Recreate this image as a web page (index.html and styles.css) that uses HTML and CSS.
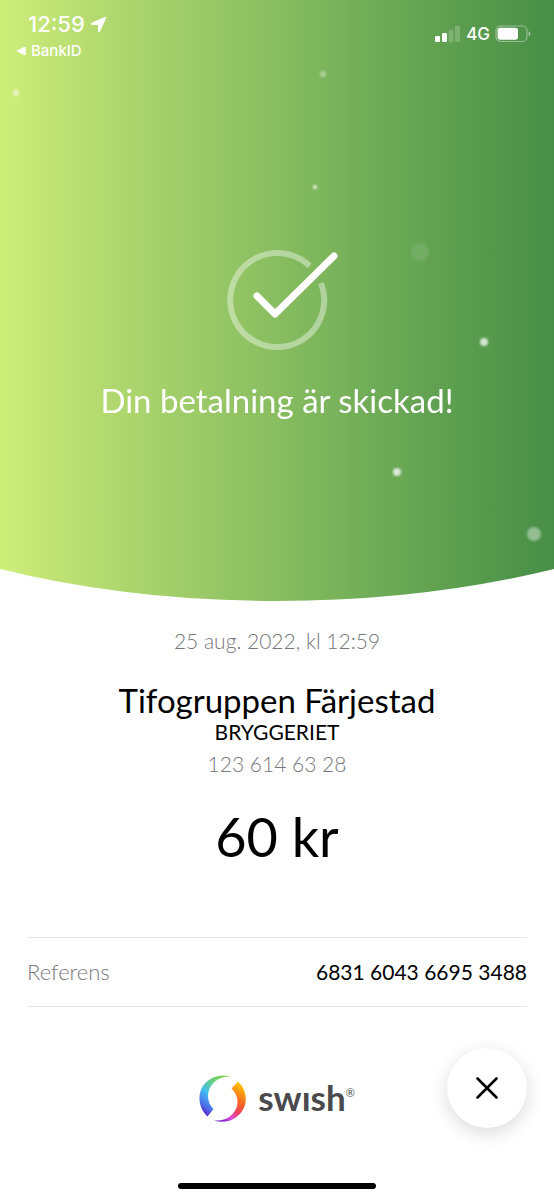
FILE: index.html
```html
<!DOCTYPE html>
<html lang="sv">
<head>
<meta charset="utf-8">
<meta name="viewport" content="width=device-width, initial-scale=1">
<title>Swish</title>
<link rel="stylesheet" href="styles.css">
</head>
<body>
<div class="screen">
  <section class="hero">
    <svg class="hero-bg" viewBox="0 0 554 602" preserveAspectRatio="none" aria-hidden="true">
      <defs>
        <linearGradient id="green">
          <stop offset="0" stop-color="#cfef7a"/>
          <stop offset=".1" stop-color="#bfe274"/>
          <stop offset=".3" stop-color="#a3cf6a"/>
          <stop offset=".5" stop-color="#88bd60"/>
          <stop offset=".75" stop-color="#65a553"/>
          <stop offset="1" stop-color="#488e47"/>
        </linearGradient>
        <filter id="soft" x="-1" y="-1" width="3" height="3"><feGaussianBlur stdDeviation="1"/></filter>
      </defs>
      <path d="M0 0H554V569Q424 601 277 601Q130 601 0 569Z" fill="url(#green)"/>
      <g fill="#fff" filter="url(#soft)">
        <circle cx="16" cy="93" r="3" opacity=".6"/>
        <circle cx="323" cy="74" r="3" opacity=".4"/>
        <circle cx="315" cy="187" r="2" opacity=".85"/>
        <circle cx="420" cy="252" r="9" opacity=".1"/>
        <circle cx="484" cy="342" r="4" opacity=".75"/>
        <circle cx="397" cy="472" r="4" opacity=".75"/>
        <circle cx="534" cy="534" r="7" opacity=".4"/>
      </g>
    </svg>
    <header class="status">
      <div class="status-left">
        <div class="clock"><span>12:59</span>
          <svg width="17" height="17" viewBox="0 0 17 17" aria-hidden="true"><path d="M1.200 7.500L15.300 1.200Q16 1 15.800 1.700L9.500 15.600Q8.700 16.200 8.500 15.300V9.200Q8.300 8.600 7.700 8.500L1.500 8.400Q.6 8 1.200 7.500Z" fill="#fff" stroke="#fff" stroke-linejoin="round"/></svg>
        </div>
        <a class="back" href="#">
          <svg width="10" height="10" viewBox="0 0 10 10" aria-hidden="true"><path d="M1 4.400L8.600 .8Q9.800 .5 9.800 1.500V8.600Q9.700 9.600 8.600 9.200L1 5.600Q0 5 1 4.400Z" fill="#fff"/></svg>
          BankID</a>
      </div>
      <div class="status-right">
        <svg width="26" height="16" viewBox="0 0 26 16" fill="#fff" aria-hidden="true">
          <rect x="0" y="10" width="5" height="6" rx="1"/><rect x="7" y="7" width="5" height="9" rx="1"/>
          <g opacity=".2"><rect x="13.500" y="4" width="5" height="12" rx="1"/><rect x="20" y="0" width="5" height="16" rx="1"/></g>
        </svg>
        <span class="network">4G</span>
        <svg width="36" height="18" viewBox="0 0 36 18" aria-hidden="true">
          <rect x="1" y="1" width="31" height="15.500" rx="4.500" fill="none" stroke="#fff" stroke-opacity=".4" stroke-width="1.200"/>
          <rect x="2.600" y="2.700" width="20.400" height="12" rx="2.600" fill="#fff"/>
          <path d="M33.700 6.300Q35.500 7 35.500 8.700T33.700 11.300Z" fill="#fff" opacity=".5"/>
        </svg>
      </div>
    </header>
    <div class="confirmation">
      <svg width="112" height="102" viewBox="0 0 112 102" fill="none" aria-hidden="true">
        <path d="M82.600 16A47 47 0 1 0 94 33" stroke="#fff" stroke-opacity=".4" stroke-width="6"/>
        <path d="M30 46L48 64L107 6" stroke="#fff" stroke-width="7" stroke-linecap="round" stroke-linejoin="round"/>
      </svg>
      <h1 class="title">Din betalning är skickad!</h1>
    </div>
  </section>
  <main class="receipt">
    <time class="muted" datetime="2022-08-25T12:59">25 aug. 2022, kl 12:59</time>
    <h2 class="payee">Tifogruppen Färjestad</h2>
    <p class="place">BRYGGERIET</p>
    <p class="muted">123 614 63 28</p>
    <p class="amount">60 kr</p>
    <dl class="reference">
      <dt>Referens</dt><dd>6831 6043 6695 3488</dd>
    </dl>
  </main>
  <footer class="footer">
    <div class="brand">
      <svg width="48" height="48" viewBox="0 0 48 48" aria-hidden="true">
        <defs>
          <linearGradient id="left" x1=".8" y1="0" x2=".2" y2="1"><stop offset="0" stop-color="#8bd14a"/><stop offset=".3" stop-color="#62cf8b"/><stop offset=".55" stop-color="#43bff0"/><stop offset=".8" stop-color="#4d73e8"/><stop offset="1" stop-color="#5b22c7"/></linearGradient>
          <linearGradient id="right" x1=".7" y1="0" x2=".2" y2="1"><stop offset="0" stop-color="#ffc400"/><stop offset=".35" stop-color="#f66b21"/><stop offset=".6" stop-color="#ed3d5c"/><stop offset=".8" stop-color="#d94fe0"/><stop offset="1" stop-color="#6a1fc4"/></linearGradient>
        </defs>
        <path d="M32 1.500C18-2.500 4 5 1 18C-1 27 2.500 36 8.500 41.500L14.500 34C7.500 27 7 16 14 8.500C19 3 25 1.500 32 1.500Z" fill="url(#left)"/>
        <path d="M15 45.500C28 50 42 43 46 30C48.500 21 45 12 39 6.500L32.500 13.500C39.500 20 41 31 34 38.500C29 44 22 46 15 45.500Z" fill="url(#right)"/>
      </svg>
      <span class="wordmark">swısh<sup>®</sup></span>
    </div>
    <button class="close" type="button" aria-label="Stäng">
      <svg width="24" height="24" viewBox="0 0 24 24" aria-hidden="true"><path d="M2.500 2.500L21.500 21.500M21.500 2.500L2.500 21.500" stroke="#000" stroke-width="2.600" stroke-linecap="round"/></svg>
    </button>
    <div class="home-bar"></div>
  </footer>
</div>
</body>
</html>
```
FILE: styles.css
```css
* { box-sizing: border-box; }
body { margin: 0; background: #fff; color: #000; font-family: Lato, "Open Sans", sans-serif; }
h1, h2, p, dl, dd { margin: 0; font-weight: 400; }
svg { display: block; flex: none; }
.screen { min-height: 100vh; display: flex; flex-direction: column; }
.hero { position: relative; color: #fff; padding-bottom: 182px; }
.hero-bg { position: absolute; inset: 0; width: 100%; height: 100%; }
.status { position: relative; display: flex; justify-content: space-between; padding: 12px 23px 0 16px; font-family: Inter, sans-serif; }
.clock { display: flex; align-items: center; gap: 5px; padding-left: 12px; font-size: 22px; line-height: 24px; font-weight: 500; }
.back { display: flex; align-items: center; gap: 5px; margin-top: 6px; font-size: 15px; line-height: 18px; font-weight: 500; color: #fff; text-decoration: none; }
.status-right { display: flex; align-items: center; gap: 5px; height: 44px; }
.network { font-size: 17px; font-weight: 500; }
.confirmation { position: relative; display: flex; flex-direction: column; align-items: center; padding-top: 190px; text-align: center; }
.confirmation svg { margin-left: 12px; }
.title { margin-top: 28px; font-size: 33px; line-height: 40px; }
.receipt { padding: 25px 27px 0; text-align: center; }
.muted { display: block; color: #77777c; font-size: 21px; line-height: 28px; font-weight: 300; }
.payee { margin-top: 25px; font-size: 33px; line-height: 40px; }
.place { font-size: 21px; line-height: 24px; margin-bottom: 6px; }
.amount { margin: 24px 0 65px; font-size: 54px; line-height: 70px; }
.reference { display: flex; justify-content: space-between; padding: 20px 0; border: solid #e4e4e4; border-width: 1px 0; font-size: 21px; line-height: 28px; }
.reference dt { color: #77777c; font-size: 22px; font-weight: 300; }
.footer { display: grid; grid-template-columns: 1fr auto 1fr; align-items: center; margin-top: auto; padding: 0 27px 11px; }
.brand { grid-column: 2; display: flex; align-items: center; gap: 11px; padding-top: 22px; }
.wordmark { color: #4a4a4d; font-size: 35px; line-height: 44px; font-weight: 700; white-space: nowrap; padding-bottom: 4px; }
.wordmark sup { font-size: 11px; line-height: 0; vertical-align: 14px; font-weight: 400; }
.close { justify-self: end; display: grid; place-items: center; width: 80px; height: 80px; padding: 0; border: 0; border-radius: 50%; background: #fff; box-shadow: 0 5px 18px rgba(0,0,0,.15); }
.home-bar { grid-column: 1 / -1; justify-self: center; width: 198px; height: 6px; margin-top: 55px; border-radius: 3px; background: #000; }
```
